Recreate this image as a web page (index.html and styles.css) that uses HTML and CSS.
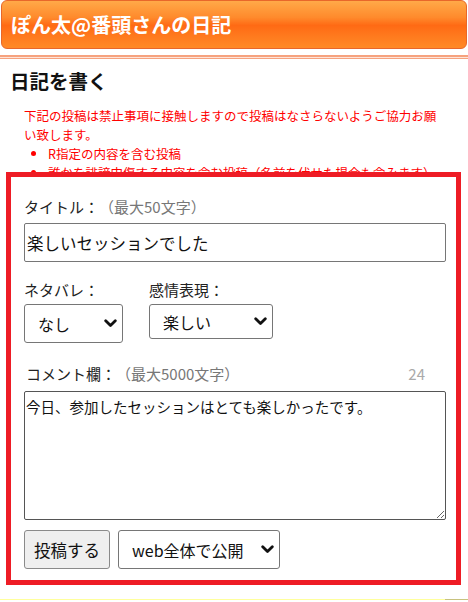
FILE: index.html
```html
<!DOCTYPE html>
<html>
<head>
	<meta charset="utf-8">
	<link rel="stylesheet" href="styles.css">
</head>
<body>

	<div class="header">ぽん太@番頭さんの日記</div>
	<div class="rule"></div>

	<h2 class="heading">日記を書く</h2>

	<div class="notice">
		<p>下記の投稿は禁止事項に接触しますので投稿はなさらないようご協力お願い致します。</p>
		<ul>
			<li>R指定の内容を含む投稿</li>
			<li>誰かを誹謗中傷する内容を含む投稿（名前を伏せた場合も含みます）</li>
		</ul>
	</div>

	<form class="panel">
		<div class="label">タイトル：<span class="hint">（最大50文字）</span></div>
		<input class="title-input" type="text" value="楽しいセッションでした">

		<div class="choices">
			<div class="choice">
				<div class="label">ネタバレ：</div>
				<select class="sel sel-spoiler">
					<option>なし</option>
				</select>
			</div>
			<div class="choice">
				<div class="label">感情表現：</div>
				<select class="sel sel-mood">
					<option>楽しい</option>
				</select>
			</div>
		</div>

		<div class="label comment-label">
			<span>コメント欄：<span class="hint">（最大5000文字）</span></span>
			<span class="count">24</span>
		</div>
		<textarea class="comment">今日、参加したセッションはとても楽しかったです。</textarea>

		<div class="actions">
			<button type="button" class="submit">投稿する</button>
			<select class="sel sel-scope">
				<option>web全体で公開</option>
			</select>
		</div>
	</form>

	<div class="foot"></div>

</body>
</html>
```

FILE: styles.css
```css
body, html {
	height: 100%;
}

body {
	margin: 0;
	padding: 0;
	background: #fff;
	color: #111;
	font-family: "Noto Sans CJK JP", "Noto Sans", sans-serif;
	text-spacing-trim: space-all;
	overflow: hidden;
}

.header {
	box-sizing: border-box;
	height: 49px;
	margin: 0 1px;
	padding: 10px 9px 0;
	border: 1px solid #e8672a;
	border-radius: 6px;
	background: linear-gradient(to bottom, #ffa948 0%, #ff8a2c 35%, #ff6a14 52%, #ff7a1e 75%, #ff8a26 100%);
	color: #fff;
	font-size: 20px;
	font-weight: bold;
	line-height: 28px;
}

.rule {
	height: 1px;
	margin-top: 6px;
	border-top: 2px solid #f6a27e;
	border-bottom: 1px solid #f6a27e;
	background: #fde4d8;
}

.heading {
	margin: 8px 0 0 10px;
	font-size: 19.5px;
	line-height: 28px;
	font-weight: bold;
}

.notice {
	height: 78px;
	padding: 0 24px 0 24px;
	color: #f00;
	font-size: 12.5px;
	line-height: 19px;
}

.notice p {
	margin: 11px 0 0;
	width: 418px;
}

.notice ul {
	margin: 0;
	padding-left: 24px;
}

.panel {
	position: relative;
	display: flex;
	flex-direction: column;
	box-sizing: border-box;
	width: 455px;
	height: 413px;
	margin: -12px 0 0 6px;
	padding: 19px 10px 0 13px;
	border: 5px solid #ee1c25;
	background: #fff;
}

.label {
	font-size: 15px;
	line-height: 22px;
	color: #222;
}

.hint {
	color: #777;
}

.title-input {
	box-sizing: border-box;
	height: 39px;
	margin: 5px 0 0;
	padding: 0 2px;
	border: 1px solid #767676;
	border-radius: 2px;
	font-family: inherit;
	font-size: 16.5px;
	color: #111;
}

.choices {
	display: flex;
	gap: 26px;
	margin-top: 17px;
}

.choice .label {
	margin-bottom: 3px;
}

.sel {
	box-sizing: border-box;
	-webkit-appearance: none;
	appearance: none;
	padding: 0 24px 0 13px;
	border: 1px solid #767676;
	border-radius: 3px;
	background: #fff url("data:image/svg+xml,%3Csvg xmlns='http://www.w3.org/2000/svg' width='13' height='9' viewBox='0 0 13 9'%3E%3Cpath d='M1.7 1.7 L6.5 6.5 L11.3 1.7' fill='none' stroke='%23111' stroke-width='2.8' stroke-linecap='round' stroke-linejoin='round'/%3E%3C/svg%3E") no-repeat right 5px center;
	font-family: inherit;
	font-size: 16px;
	color: #111;
}

.sel-spoiler {
	width: 99px;
	height: 39px;
}

.sel-mood {
	width: 124px;
	height: 35px;
}

.comment-label {
	display: flex;
	justify-content: space-between;
	margin: 20px 21px 0 2px;
}

.count {
	color: #aaa;
}

.comment {
	box-sizing: border-box;
	height: 129px;
	margin: 6px 0 0;
	padding: 4px 1px;
	border: 1px solid #555;
	border-radius: 2px;
	font-family: inherit;
	font-size: 14.5px;
	line-height: 22px;
	color: #111;
	resize: vertical;
}

.actions {
	display: flex;
	gap: 8px;
	margin-top: 10px;
}

.submit {
	box-sizing: border-box;
	width: 86px;
	height: 39px;
	border: 1px solid #8a8a8a;
	border-radius: 3px;
	background: #efefef;
	font-family: inherit;
	font-size: 16.5px;
	color: #111;
}

.sel-scope {
	width: 162px;
	height: 39px;
	padding-left: 13px;
}

.foot {
	height: 1px;
	margin-top: 14px;
	background: linear-gradient(to right, #ffff9c 0, #ffff9c 445px, #c8c27e 445px);
}
```
